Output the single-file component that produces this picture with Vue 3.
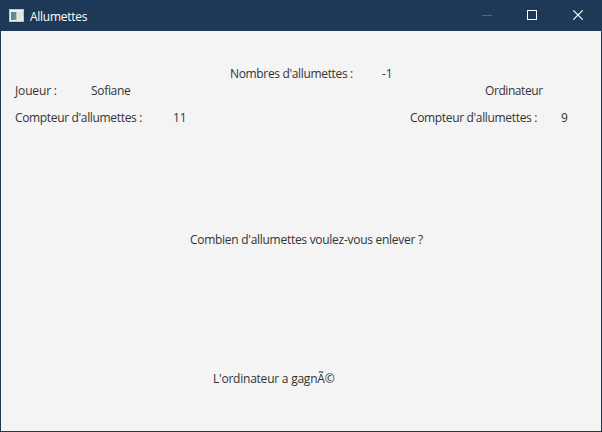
<script setup>
const title = 'Allumettes'
const total = -1
const player = { name: 'Sofiane', count: 11 }
const computer = { name: 'Ordinateur', count: 9 }
</script>

<template>
  <div class="window">
    <header class="titlebar">
      <svg class="app-icon" width="16" height="14" viewBox="0 0 16 14">
        <defs>
          <linearGradient id="pane" x1="0" y1="0" x2="1" y2="1">
            <stop offset="0" stop-color="#4b7fae" />
            <stop offset="1" stop-color="#55a877" />
          </linearGradient>
        </defs>
        <rect x="0.5" y="0.5" width="14" height="12" fill="#eeeeee" stroke="#c3c5c8" />
        <rect x="2" y="3" width="5" height="8" fill="url(#pane)" />
        <rect x="7" y="3" width="1" height="8" fill="#a9c4b8" />
        <rect x="9" y="3" width="3" height="8" fill="#e3e3e3" />
        <rect x="13" y="2" width="1" height="5" fill="#c8dccf" />
      </svg>
      <span class="title">{{ title }}</span>
      <div class="controls">
        <svg width="46" height="30" viewBox="0 0 46 30"><path d="M18 14.5H28" stroke="#526983" /></svg>
        <svg width="46" height="30" viewBox="0 0 46 30"><rect x="17.5" y="9.5" width="9" height="9" fill="none" stroke="#fff" /></svg>
        <svg width="46" height="30" viewBox="0 0 46 30"><path d="M17.3 9.3L26.7 18.7M26.7 9.3L17.3 18.7" fill="none" stroke="#fff" stroke-width="1.2" /></svg>
      </div>
    </header>
    <main class="content">
      <div class="total"><span class="total-label">Nombres d'allumettes :</span><span>{{ total }}</span></div>
      <div class="row names">
        <span>Joueur :</span>
        <span class="name">{{ player.name }}</span>
        <span class="computer">{{ computer.name }}</span>
      </div>
      <div class="row counts">
        <span class="count-label">Compteur d'allumettes :</span>
        <span>{{ player.count }}</span>
        <span class="count-label">Compteur d'allumettes :</span>
        <span>{{ computer.count }}</span>
      </div>
      <p class="question">Combien d'allumettes voulez-vous enlever ?</p>
      <p class="result">L'ordinateur a gagnÃ©</p>
    </main>
  </div>
</template>

<style>
body { margin: 0; }
</style>

<style scoped>
.window {
  box-sizing: border-box;
  width: 602px;
  height: 432px;
  display: flex;
  flex-direction: column;
  border: 1px solid #1d3957;
  background: #f4f4f4;
  font: 12px/17px "Open Sans", "Noto Sans", sans-serif;
  letter-spacing: -0.15px;
  color: #333;
  white-space: nowrap;
}
.titlebar {
  height: 30px;
  flex: none;
  display: flex;
  align-items: center;
  padding-left: 8px;
  background: #1d3957;
  color: #fff;
}
.title { margin-left: 5px; letter-spacing: -0.28px; }
.controls { display: flex; margin-left: auto; margin-right: -1px; }
.controls svg { display: block; }
.content { padding-top: 34px; }
.total { display: grid; grid-template-columns: 152px auto; padding-left: 229px; }
.row { display: grid; padding-left: 14px; }
.names { grid-template-columns: 76px 394px auto; }
.name { letter-spacing: -0.32px; }
.computer { letter-spacing: -0.42px; }
.total-label, .count-label { letter-spacing: -0.34px; }
.counts { grid-template-columns: 158px 237px 151px auto; margin-top: 10px; }
.question { margin: 105px 0 0; padding-left: 189px; letter-spacing: -0.28px; }
.result { margin: 122px 0 0; padding-left: 212px; letter-spacing: -0.23px; }
</style>
